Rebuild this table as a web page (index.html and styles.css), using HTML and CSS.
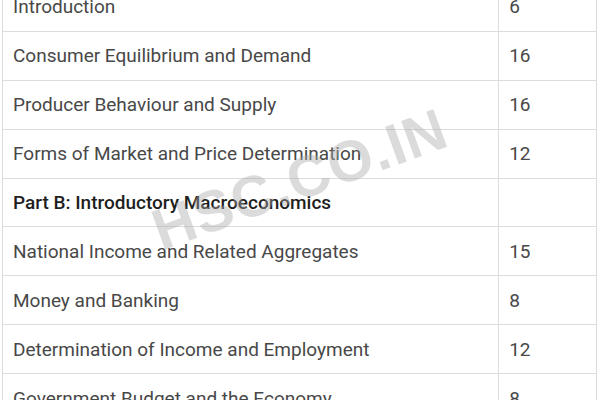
FILE: index.html
```html
<!DOCTYPE html>
<html>
<head>
<meta charset="utf-8">
<link rel="stylesheet" href="styles.css">
</head>
<body>
<div class="page">
  <table class="syllabus">
    <tbody>
      <tr><td class="topic">Introduction</td><td class="marks">6</td></tr>
      <tr><td class="topic">Consumer Equilibrium and Demand</td><td class="marks">16</td></tr>
      <tr><td class="topic">Producer Behaviour and Supply</td><td class="marks">16</td></tr>
      <tr><td class="topic">Forms of Market and Price Determination</td><td class="marks">12</td></tr>
      <tr><td class="topic part">Part B: Introductory Macroeconomics</td><td class="marks"></td></tr>
      <tr><td class="topic">National Income and Related Aggregates</td><td class="marks">15</td></tr>
      <tr><td class="topic">Money and Banking</td><td class="marks">8</td></tr>
      <tr><td class="topic">Determination of Income and Employment</td><td class="marks">12</td></tr>
      <tr><td class="topic">Government Budget and the Economy</td><td class="marks">8</td></tr>
    </tbody>
  </table>
  <div class="watermark">HSC.CO.IN</div>
</div>
</body>
</html>
```

FILE: styles.css
```css
html, body {
  margin: 0;
  padding: 0;
  background: #ffffff;
  overflow: hidden;
}
.page {
  position: relative;
  width: 600px;
  height: 400px;
  overflow: hidden;
  padding-left: 2px;
  box-sizing: border-box;
}
.syllabus {
  border-collapse: collapse;
  width: 595px;
  margin-top: -18px;
  font-family: Roboto, "Liberation Sans", sans-serif;
  font-size: 19px;
  color: #484848;
}
.syllabus tr {
  height: 48.9px;
}
.syllabus td {
  border: 1px solid #dcdcdc;
  padding: 0 10px;
  vertical-align: middle;
}
.topic {
  width: 476px;
}
.marks {
  width: 77px;
}
.part {
  font-weight: 500;
  color: #1e1e1e;
}
.watermark {
  position: absolute;
  left: 143px;
  top: 200px;
  font-family: "Liberation Sans", Arial, sans-serif;
  font-weight: bold;
  font-size: 58px;
  letter-spacing: 1px;
  color: rgba(170, 170, 170, 0.42);
  transform: rotate(-20deg);
  transform-origin: left top;
  white-space: nowrap;
}
```
